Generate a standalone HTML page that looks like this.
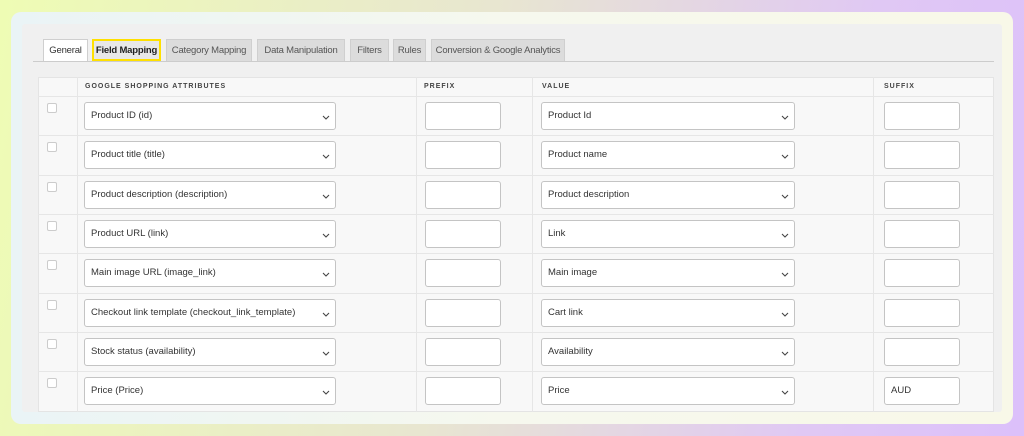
<!DOCTYPE html>
<html><head><style>
*{box-sizing:border-box;margin:0;padding:0}
body{width:1024px;height:436px;overflow:hidden;background:linear-gradient(100deg,#eefcb4 0%,#e8e6d0 45%,#e0c8f4 80%,#dcc0fa 100%);font-family:"Liberation Sans",sans-serif;position:relative}
.card{position:absolute;left:11px;top:12px;width:1002px;height:412px;border-radius:10px;background:linear-gradient(90deg,#eaf4f6,#f6f8ee 50%,#f8f8e8)}
.panel{position:absolute;left:22px;top:24px;width:980px;height:388px;background:#f0f0f0;border-radius:3px}
.tab{position:absolute;top:39px;height:22px;background:#dcdcdc;border:1px solid #cfcfcf;border-bottom:none;font-size:9.5px;color:#555;line-height:21px;text-align:center;letter-spacing:-0.2px}
.line{position:absolute;left:33px;top:61px;width:961px;height:1px;background:#ccc}
.tbl{position:absolute;left:38px;top:77px;width:956px;height:335px;background:#f8f8f8;border:1px solid #e4e4e4}
.h{position:absolute;top:77px;font-size:7px;font-weight:bold;letter-spacing:1px;color:#444;line-height:19px}
.vl{position:absolute;top:77px;width:1px;height:335px;background:#e6e6e6}
.hl{position:absolute;left:38px;width:956px;height:1px;background:#e6e6e6}
.sel,.inp{position:absolute;height:28px;background:#fff;border:1px solid #c4c4c4;border-radius:3px;font-size:9.5px;color:#333;line-height:26px;padding-left:6px}
.sel svg{position:absolute;right:5px;top:12px}
.cb{position:absolute;left:47px;width:10px;height:10px;background:#fff;border:1px solid #ccc;border-radius:2px}
</style></head><body>
<div class="card"></div><div class="panel"></div>
<div class="tab" style="left:43px;width:45px;background:#fff;color:#333">General</div>
<div class="tab" style="left:92px;width:69px;background:#e8e8e8;border:2px solid #ffe000;color:#222;font-weight:bold;line-height:19px">Field Mapping</div>
<div class="tab" style="left:166px;width:86px">Category Mapping</div>
<div class="tab" style="left:257px;width:88px">Data Manipulation</div>
<div class="tab" style="left:350px;width:39px">Filters</div>
<div class="tab" style="left:393px;width:33px">Rules</div>
<div class="tab" style="left:431px;width:134px">Conversion &amp; Google Analytics</div>
<div class="line"></div>
<div class="tbl"></div>
<div class="h" style="left:85px">GOOGLE SHOPPING ATTRIBUTES</div>
<div class="h" style="left:424px">PREFIX</div>
<div class="h" style="left:542px">VALUE</div>
<div class="h" style="left:884px">SUFFIX</div>
<div class="vl" style="left:77px"></div><div class="vl" style="left:416px"></div><div class="vl" style="left:532px"></div><div class="vl" style="left:873px"></div>
<div id="rows"></div>
<script>
var a=["Product ID (id)","Product title (title)","Product description (description)","Product URL (link)","Main image URL (image_link)","Checkout link template (checkout_link_template)","Stock status (availability)","Price (Price)"];
var v=["Product Id","Product name","Product description","Link","Main image","Cart link","Availability","Price"];
var chev='<svg width="8" height="5" viewBox="0 0 8 5"><path d="M1 1l3 3L7 1" fill="none" stroke="#444" stroke-width="1.1"/></svg>';
var h='';
for(var i=0;i<8;i++){var y=96+i*39.3;
h+='<div class="hl" style="top:'+y+'px"></div>';
h+='<div class="cb" style="top:'+(y+7)+'px"></div>';
h+='<div class="sel" style="left:84px;width:252px;top:'+(y+6)+'px">'+a[i]+chev+'</div>';
h+='<div class="inp" style="left:425px;width:76px;top:'+(y+6)+'px"></div>';
h+='<div class="sel" style="left:541px;width:254px;top:'+(y+6)+'px">'+v[i]+chev+'</div>';
h+='<div class="inp" style="left:884px;width:76px;top:'+(y+6)+'px">'+(i==7?'AUD':'')+'</div>';}
document.getElementById('rows').innerHTML=h;
</script>
</body></html>
